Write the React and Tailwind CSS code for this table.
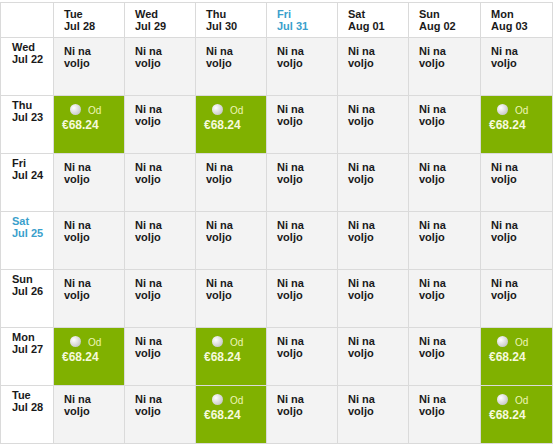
const cols = [
  ['Tue', 'Jul 28'],
  ['Wed', 'Jul 29'],
  ['Thu', 'Jul 30'],
  ['Fri', 'Jul 31', true],
  ['Sat', 'Aug 01'],
  ['Sun', 'Aug 02'],
  ['Mon', 'Aug 03'],
]

const rows = [
  { day: 'Wed', date: 'Jul 22', green: [] },
  { day: 'Thu', date: 'Jul 23', green: [0, 2, 6] },
  { day: 'Fri', date: 'Jul 24', green: [] },
  { day: 'Sat', date: 'Jul 25', green: [], blue: true },
  { day: 'Sun', date: 'Jul 26', green: [] },
  { day: 'Mon', date: 'Jul 27', green: [0, 2, 6] },
  { day: 'Tue', date: 'Jul 28', green: [2, 6] },
]

function PriceCell() {
  return (
    <div className="bg-[#80b100] pl-[8px] pt-[8px]">
      <div className="flex items-end">
        <span className="ml-[8px] inline-block h-[11px] w-[11px] rounded-full bg-[radial-gradient(circle_at_35%_35%,#ffffff,#d4d4d4_60%,#b5b5b5)]"></span>
        <span className="ml-[7px] text-[10px] leading-none text-[#eef6b8] translate-y-[1px]">Od</span>
      </div>
      <div className="mt-[4px] text-[12px] leading-[13px] font-bold text-[#f6f9dc]">€68.24</div>
    </div>
  )
}

function EmptyCell() {
  return (
    <div className="bg-[#f3f3f3] pl-[10px] pt-[7px] text-[11px] leading-[12px] font-bold text-[#1a1a1a]">
      <div>Ni na</div>
      <div>voljo</div>
    </div>
  )
}

export default function App() {
  return (
    <div className="h-[444px] w-[554px] bg-white pt-[2px] font-['Liberation_Sans',Arial,sans-serif]">
      <div className="grid w-[553px] grid-cols-[52px_70px_70px_70px_70px_70px_71px_71px] grid-rows-[34px_repeat(7,57px)] gap-px border border-[#dadada] bg-[#dadada]">
        <div className="bg-white"></div>
        {cols.map(([d, date, blue]) => (
          <div
            key={date}
            className={`bg-white pl-[10px] pt-[5px] text-[11px] leading-[12px] font-bold ${blue ? 'text-[#3a9fcc]' : 'text-[#1a1a1a]'}`}
          >
            <div>{d}</div>
            <div>{date}</div>
          </div>
        ))}
        {rows.map((r) => (
          <Row key={r.date} row={r} />
        ))}
      </div>
    </div>
  )
}

function Row({ row }) {
  return (
    <>
      <div
        className={`bg-white pl-[11px] pt-[3px] text-[11px] leading-[12px] font-bold ${row.blue ? 'text-[#3a9fcc]' : 'text-[#1a1a1a]'}`}
      >
        <div>{row.day}</div>
        <div>{row.date}</div>
      </div>
      {cols.map((c, i) =>
        row.green.includes(i) ? <PriceCell key={i} /> : <EmptyCell key={i} />
      )}
    </>
  )
}
